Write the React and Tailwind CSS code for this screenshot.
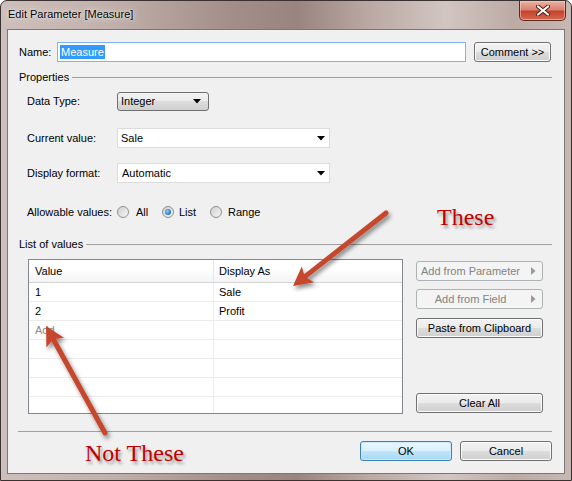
import React from 'react';

// Small black combo arrow
const ComboArrow = ({ className = '' }) => (
  <svg width="8" height="5" viewBox="0 0 8 5" className={className}>
    <path d="M0 0h8L4 4.5z" fill="#000" />
  </svg>
);

const SideArrow = () => (
  <svg width="5" height="8" viewBox="0 0 5 8">
    <path d="M0 0v8l4.5-4z" fill="#9a9a9a" />
  </svg>
);

const Radio = ({ checked }) => (
  <div className="w-[12px] h-[12px] rounded-full border border-[#8e8f8f] bg-[linear-gradient(135deg,#cfd0d0_0%,#f5f5f5_100%)] flex items-center justify-center shrink-0">
    {checked && (
      <div className="w-[6px] h-[6px] rounded-full bg-[radial-gradient(circle_at_40%_40%,#9cd2f6_0%,#2a82d0_55%,#14508f_100%)]" />
    )}
  </div>
);

const WinButton = ({ children, className = '', disabled, primary, arrow }) => {
  let look = 'border-[#707070] bg-[linear-gradient(180deg,#f2f2f2_0%,#ebebeb_50%,#dddddd_50%,#cfcfcf_100%)] text-black shadow-[inset_0_0_0_1px_#fbfbfb]';
  if (disabled) look = 'border-[#adb2b5] bg-[#f4f4f4] text-[#838383]';
  if (primary) look = 'border-[#3c7fb1] bg-[linear-gradient(180deg,#eaf6fd_0%,#d9f0fc_50%,#bee6fd_50%,#a7d9f5_100%)] text-black shadow-[inset_0_0_0_1px_#c9ecfc]';
  return (
    <div className={`flex items-center rounded-[3px] border text-[11px] leading-none ${look} ${className}`}>
      <span className="flex-1 text-center">{children}</span>
      {arrow && (
        <span className="w-[18px] flex justify-center">
          <SideArrow />
        </span>
      )}
    </div>
  );
};

const GroupHeader = ({ label }) => (
  <div className="flex items-center h-[14px] pl-[11px] pr-[12px]">
    <span className="text-[11px] leading-none">{label}</span>
    <div className="flex-1 h-px bg-[#a0a0a0] ml-[3px]" />
  </div>
);

// arrow geometry for the annotation overlay
const arrowShape = (x1, y1, x2, y2, len = 19, half = 10) => {
  const dx = x2 - x1;
  const dy = y2 - y1;
  const l = Math.hypot(dx, dy);
  const ux = dx / l;
  const uy = dy / l;
  const bx = x2 - ux * len;
  const by = y2 - uy * len;
  const px = -uy * half;
  const py = ux * half;
  return {
    shaft: { x1, y1, x2: bx + ux * 3, y2: by + uy * 3 },
    head: `${x2},${y2} ${bx + px},${by + py} ${bx + ux * 4},${by + uy * 4} ${bx - px},${by - py}`,
  };
};

const arrows = [arrowShape(386, 213, 293, 286), arrowShape(105, 433, 46, 326)];

const rows = [
  { value: '1', display: 'Sale' },
  { value: '2', display: 'Profit' },
  { value: 'Add', display: '', placeholder: true },
  { value: '', display: '' },
  { value: '', display: '' },
  { value: '', display: '' },
  { value: '', display: '' },
];

export default function App() {
  return (
    <div className="relative w-[572px] h-[481px] overflow-hidden [font-family:'Liberation_Sans',Arial,sans-serif] text-black">
      <div className="w-full h-full flex flex-col border border-[#3a3230] rounded-t-[7px] px-[6px] pb-[6px] bg-[linear-gradient(90deg,#cdbfbb_0%,#c2b2ad_18%,#a48e89_40%,#9a847f_52%,#b9a7a2_64%,#d2c6c2_78%,#bcaaa5_90%,#c7b8b4_100%)]">
        {/* title bar */}
        <div className="h-[28px] flex items-start justify-between shrink-0">
          <span className="pl-[1px] mt-[8px] text-[11px] leading-none [text-shadow:0_0_6px_rgba(255,255,255,0.9),0_0_2px_rgba(255,255,255,0.8)]">
            Edit Parameter [Measure]
          </span>
          <div className="w-[47px] h-[20px] mr-[-1px] rounded-b-[5px] border border-t-0 border-[#5a2a22] bg-[linear-gradient(180deg,#eab3a4_0%,#d9826f_45%,#c7412b_55%,#d46a50_100%)] flex items-center justify-center shadow-[inset_0_0_0_1px_rgba(255,220,210,0.5)]">
            <svg width="14" height="11" viewBox="0 0 14 11">
              <path d="M2 1.5l10 8M12 1.5l-10 8" stroke="#4a1c14" strokeWidth="4" strokeLinecap="round" />
              <path d="M2 1.5l10 8M12 1.5l-10 8" stroke="#fff" strokeWidth="2.2" strokeLinecap="round" />
            </svg>
          </div>
        </div>

        {/* dialog body */}
        <div className="h-[445px] border border-[#7d7673] bg-[#f0f0f0] flex flex-col text-[11px]">
          {/* name */}
          <div className="flex items-center h-[20px] mt-[12px] pl-[11px]">
            <span className="w-[38px]">Name:</span>
            <div className="w-[409px] h-[20px] border border-[#7eb4ea] bg-white flex items-center pl-[2px]">
              <span className="bg-[#3399ff] text-white px-[1px] leading-[14px]">Measure</span>
            </div>
            <WinButton className="ml-[8px] w-[77px] h-[20px]">Comment &gt;&gt;</WinButton>
          </div>

          <div className="mt-[8px]">
            <GroupHeader label="Properties" />
          </div>

          {/* data type */}
          <div className="flex items-center h-[19px] mt-[8px] pl-[19px]">
            <span className="w-[90px]">Data Type:</span>
            <div className="w-[92px] h-[19px] rounded-[3px] border border-[#707070] bg-[linear-gradient(180deg,#f2f2f2_0%,#ebebeb_50%,#dddddd_50%,#cfcfcf_100%)] flex items-center justify-between pl-[3px] pr-[7px]">
              <span>Integer</span>
              <ComboArrow />
            </div>
          </div>

          {/* current value */}
          <div className="flex items-center h-[20px] mt-[17px] pl-[19px]">
            <span className="w-[90px]">Current value:</span>
            <div className="w-[213px] h-[20px] border border-[#dcdcdc] bg-white flex items-center justify-between pl-[3px] pr-[4px]">
              <span>Sale</span>
              <ComboArrow />
            </div>
          </div>

          {/* display format */}
          <div className="flex items-center h-[20px] mt-[15px] pl-[19px]">
            <span className="w-[90px]">Display format:</span>
            <div className="w-[213px] h-[20px] border border-[#dcdcdc] bg-white flex items-center justify-between pl-[4px] pr-[4px]">
              <span>Automatic</span>
              <ComboArrow />
            </div>
          </div>

          {/* allowable values */}
          <div className="flex items-center h-[14px] mt-[22px] pl-[19px]">
            <span className="w-[90px]">Allowable values:</span>
            <div className="w-[45px] flex items-center gap-[7px]">
              <Radio />
              <span>All</span>
            </div>
            <div className="w-[48px] flex items-center gap-[5px]">
              <Radio checked />
              <span>List</span>
            </div>
            <div className="flex items-center gap-[6px]">
              <Radio />
              <span>Range</span>
            </div>
          </div>

          <div className="mt-[18px]">
            <GroupHeader label="List of values" />
          </div>

          {/* list + side buttons */}
          <div className="flex mt-[8px] pl-[20px]">
            <div className="w-[375px] h-[155px] border border-[#828790] bg-white flex flex-col overflow-hidden">
              <div className="h-[23px] shrink-0 flex border-b border-[#d5d5d5] bg-[linear-gradient(180deg,#ffffff_0%,#ffffff_40%,#f3f4f6_100%)]">
                <div className="w-[185px] border-r border-[#e3e5e8] flex items-center pl-[6px]">Value</div>
                <div className="flex-1 flex items-center pl-[5px]">Display As</div>
              </div>
              {rows.map((row, i) => (
                <div key={i} className="h-[19px] shrink-0 flex border-b border-[#ececec]">
                  <div className={`w-[185px] border-r border-[#ececec] flex items-center pl-[6px] pt-[1px] ${row.placeholder ? 'text-[#8c8c8c]' : ''}`}>
                    {row.value}
                  </div>
                  <div className="flex-1 flex items-center pl-[5px] pt-[1px]">{row.display}</div>
                </div>
              ))}
            </div>
            <div className="ml-[13px] w-[127px] flex flex-col">
              <WinButton disabled arrow className="mt-[2px] h-[20px]">Add from Parameter</WinButton>
              <WinButton disabled arrow className="mt-[8px] h-[20px]">Add from Field</WinButton>
              <WinButton className="mt-[9px] h-[20px]">Paste from Clipboard</WinButton>
              <WinButton className="mt-[55px] h-[20px]">Clear All</WinButton>
            </div>
          </div>

          <div className="mt-[17px] ml-[10px] mr-[12px] h-px bg-[#a0a0a0]" />

          <div className="mt-[9px] flex justify-end gap-[8px] pr-[12px]">
            <WinButton primary className="w-[92px] h-[20px]">OK</WinButton>
            <WinButton className="w-[92px] h-[20px]">Cancel</WinButton>
          </div>
        </div>
      </div>

      {/* annotations drawn over the dialog */}
      <svg className="absolute left-0 top-0 pointer-events-none" width="572" height="481">
        <defs>
          <filter id="shade" x="-20%" y="-20%" width="140%" height="140%">
            <feDropShadow dx="2" dy="3" stdDeviation="2.2" floodColor="#000" floodOpacity="0.45" />
          </filter>
        </defs>
        {arrows.map((a, i) => (
          <g key={i} filter="url(#shade)">
            <line {...a.shaft} stroke="#c4472d" strokeWidth="5" strokeLinecap="round" />
            <polygon points={a.head} fill="#c4472d" />
          </g>
        ))}
      </svg>
      <span className="absolute left-[437px] top-[205px] text-[24px] leading-none text-[#c00000] [font-family:'Liberation_Serif','Times_New_Roman',serif] [text-shadow:2px_3px_3px_rgba(0,0,0,0.35)]">
        These
      </span>
      <span className="absolute left-[85px] top-[441px] text-[24px] leading-none text-[#c00000] [font-family:'Liberation_Serif','Times_New_Roman',serif] [text-shadow:2px_3px_3px_rgba(0,0,0,0.35)]">
        Not These
      </span>
    </div>
  );
}
